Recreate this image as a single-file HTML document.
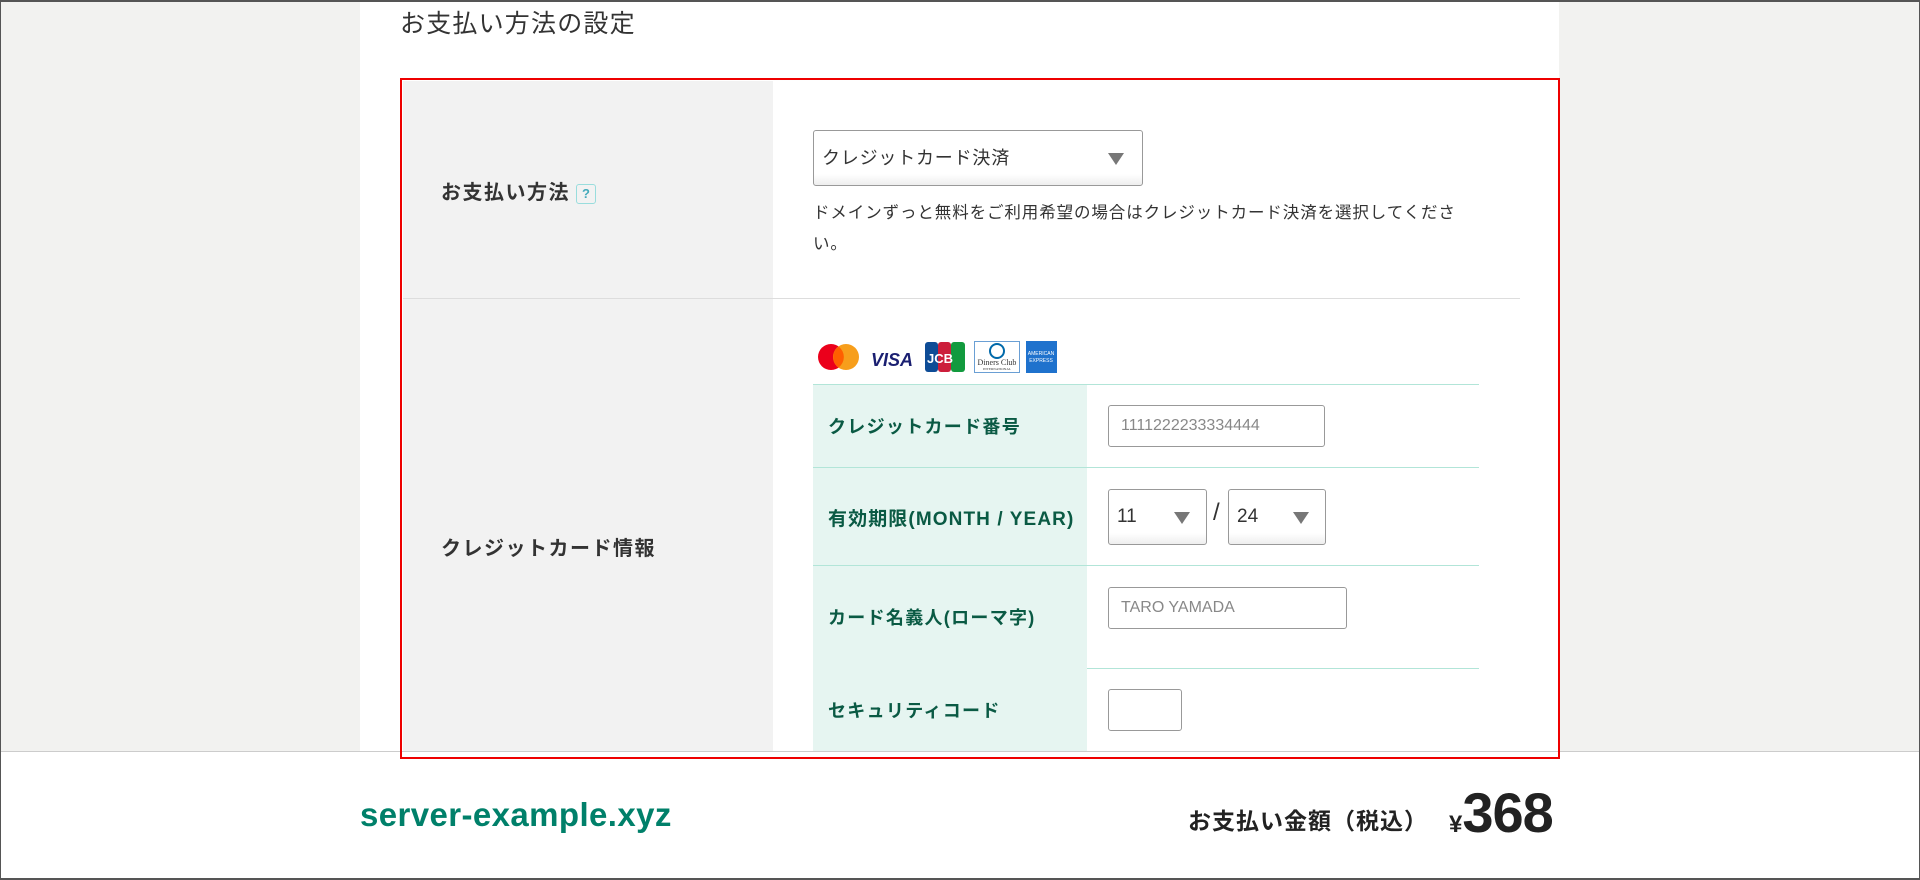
<!DOCTYPE html>
<html><head><meta charset="utf-8"><style>
*{box-sizing:border-box;margin:0;padding:0}
body{width:1920px;height:880px;background:#f2f2f0;font-family:"Liberation Sans","Noto Sans CJK JP",sans-serif;color:#333;position:relative;overflow:hidden}
.frame{position:absolute;left:0;top:0;width:1920px;height:880px;border:1px solid #555;border-top:2px solid #555;border-bottom:2px solid #555;pointer-events:none;z-index:10}
.panel{position:absolute;left:360px;top:0;width:1199px;height:760px;background:#fff}
.title{position:absolute;left:400px;top:4px;font-size:25px;letter-spacing:1.2px;color:#333}
.red{position:absolute;left:400px;top:78px;width:1160px;height:681px;border:2px solid #e00;z-index:5}
.lc{position:absolute;left:403px;top:81px;width:370px;height:670px;background:#f2f2f2}
.sep{position:absolute;left:403px;top:298px;width:1117px;height:1px;background:#ddd}
.lab{position:absolute;font-weight:bold;font-size:20px;letter-spacing:1.5px;color:#333}
.q{display:inline-block;width:20px;height:20px;border:1px solid #9dd;border-radius:3px;color:#4ab;font-size:13px;text-align:center;line-height:18px;vertical-align:middle;margin-left:6px;letter-spacing:0}
.sel{position:absolute;border:1px solid #999;border-radius:3px;background:linear-gradient(#fff 80%,#eee);font-size:18px;color:#333;padding-left:8px}
.tri{position:absolute;width:0;height:0;border-left:8px solid transparent;border-right:8px solid transparent;border-top:12px solid #777}
.help{position:absolute;left:813px;top:198px;width:660px;font-size:16.5px;letter-spacing:0.9px;line-height:31px;color:#333}
.tbl{position:absolute;left:813px;top:384px;width:666px;height:367px;border-top:1px solid #b2e5d8}
.tl{position:absolute;left:813px;top:385px;width:274px;height:366px;background:#e6f5f1}
.hl{position:absolute;height:1px;background:#b2e5d8}
.gl{position:absolute;left:828px;font-weight:bold;font-size:18px;letter-spacing:1.3px;color:#0a5a44}
.inp{position:absolute;border:1px solid #999;border-radius:3px;background:#fff;font-size:16px;color:#888;padding-left:12px}
.foot{position:absolute;left:0;top:751px;width:1920px;height:129px;background:#fff;border-top:1px solid #ccc}
</style></head><body>
<div class="panel"></div>
<div class="title">お支払い方法の設定</div>
<div class="lc"></div>
<div class="sep"></div>
<div class="lab" style="left:441px;top:176px">お支払い方法<span class="q">?</span></div>
<div class="sel" style="left:813px;top:130px;width:330px;height:56px;line-height:54px;letter-spacing:0.8px">クレジットカード決済<span class="tri" style="right:18px;top:22px"></span></div>
<div class="help">ドメインずっと無料をご利用希望の場合はクレジットカード決済を選択してください。</div>
<div class="lab" style="left:441px;top:532px">クレジットカード情報</div>
<svg style="position:absolute;left:815px;top:340px" width="245" height="34">
<circle cx="16" cy="17" r="13" fill="#eb001b"/><circle cx="31" cy="17" r="13" fill="#f79e1b"/><path d="M23.5 6.5a13 13 0 0 1 0 21a13 13 0 0 1 0-21z" fill="#ff5f00"/>
<text x="56" y="26" font-family="Liberation Sans" font-weight="bold" font-style="italic" font-size="18" fill="#1a1f71">VISA</text>
<rect x="110" y="2" width="13" height="30" rx="3" fill="#0e4c96"/><rect x="123" y="2" width="13" height="30" rx="3" fill="#cc1e3b"/><rect x="136" y="2" width="14" height="30" rx="3" fill="#129a3e"/>
<text x="112" y="23" font-family="Liberation Sans" font-weight="bold" font-size="13" fill="#fff">JCB</text>
<rect x="159.5" y="1.5" width="45" height="31" fill="#fff" stroke="#6a9fd4"/><circle cx="182" cy="11" r="7" fill="none" stroke="#0069aa" stroke-width="2"/>
<text x="182" y="25" text-anchor="middle" font-family="Liberation Serif" font-size="8" fill="#333">Diners Club</text>
<text x="182" y="30" text-anchor="middle" font-family="Liberation Serif" font-size="3.5" fill="#333">INTERNATIONAL</text>
<rect x="211" y="1" width="31" height="32" fill="#1f72cd"/><text x="226" y="15" text-anchor="middle" font-family="Liberation Sans" font-size="5" fill="#fff">AMERICAN</text><text x="226" y="22" text-anchor="middle" font-family="Liberation Sans" font-size="5" fill="#fff">EXPRESS</text>
</svg>
<div class="tl"></div>
<div class="tbl"></div>
<div class="hl" style="left:813px;top:467px;width:666px"></div>
<div class="hl" style="left:813px;top:565px;width:666px"></div>
<div class="hl" style="left:1087px;top:668px;width:392px"></div>
<div class="gl" style="top:413px">クレジットカード番号</div>
<div class="gl" style="top:504px;font-size:19px;letter-spacing:1.1px">有効期限(MONTH / YEAR)</div>
<div class="gl" style="top:604px">カード名義人(ローマ字)</div>
<div class="gl" style="top:697px">セキュリティコード</div>
<div class="inp" style="left:1108px;top:405px;width:217px;height:42px;line-height:40px">1111222233334444</div>
<div class="sel" style="left:1108px;top:489px;width:99px;height:56px;line-height:54px;font-size:19px">11<span class="tri" style="right:16px;top:22px"></span></div>
<div style="position:absolute;left:1213px;top:499px;font-size:24px">/</div>
<div class="sel" style="left:1228px;top:489px;width:98px;height:56px;line-height:54px;font-size:19px">24<span class="tri" style="right:16px;top:22px"></span></div>
<div class="inp" style="left:1108px;top:587px;width:239px;height:42px;line-height:40px">TARO YAMADA</div>
<div class="inp" style="left:1108px;top:689px;width:74px;height:42px"></div>
<div class="foot">
<div style="position:absolute;left:360px;top:44px;font-size:33px;letter-spacing:0.4px;font-weight:bold;color:#00806a">server-example.xyz</div>
<div style="position:absolute;left:1188px;top:50px;font-size:23px;letter-spacing:1px;font-weight:bold;color:#222">お支払い金額（税込）</div>
<div style="position:absolute;left:1449px;top:28px;font-weight:bold;color:#222;white-space:nowrap"><span style="font-size:24px">¥</span><span style="font-size:56px;letter-spacing:-1px">368</span></div>
</div>
<div class="red"></div>
<div class="frame"></div>
</body></html>
